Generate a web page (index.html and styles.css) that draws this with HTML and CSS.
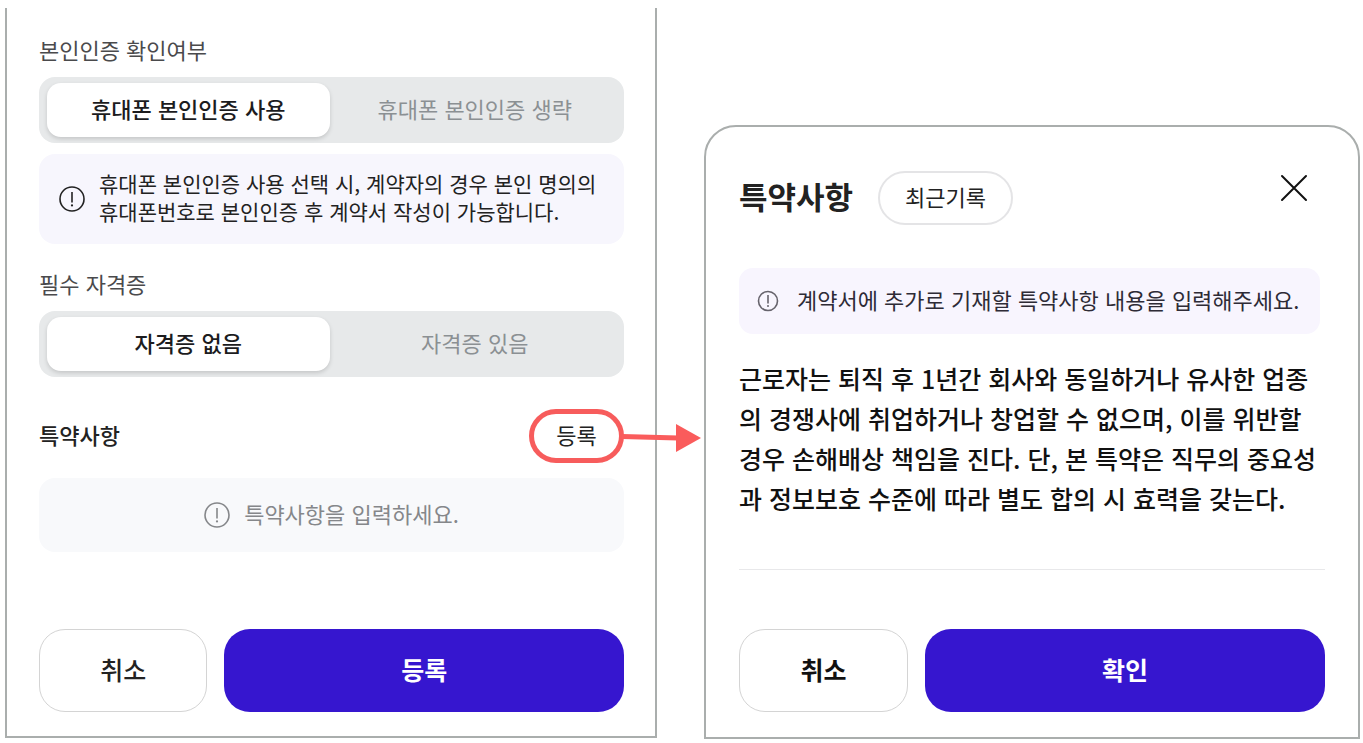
FILE: index.html
```html
<!DOCTYPE html>
<html lang="ko">

<head>
    <meta charset="UTF-8">
    <meta name="viewport" content="width=device-width, initial-scale=1">
    <title>특약사항</title>
    <link rel="stylesheet" href="styles.css">
</head>

<body>
    <main class="screens">
        <section class="panel contract">
            <fieldset class="group">
                <legend>본인인증 확인여부</legend>
                <div class="toggle">
                    <label><input type="radio" name="verify" checked><span>휴대폰 본인인증 사용</span></label>
                    <label><input type="radio" name="verify"><span>휴대폰 본인인증 생략</span></label>
                </div>
            </fieldset>

            <div class="info">
                <svg class="icon" viewBox="0 0 26 26" aria-hidden="true">
                    <circle cx="13" cy="13" r="12" />
                    <path d="M13 6v10.5" />
                    <circle class="dot" cx="13" cy="19.4" r="1.1" />
                </svg>
                <p>휴대폰 본인인증 사용 선택 시, 계약자의 경우 본인 명의의<br>휴대폰번호로 본인인증 후 계약서 작성이 가능합니다.</p>
            </div>

            <fieldset class="group">
                <legend>필수 자격증</legend>
                <div class="toggle">
                    <label><input type="radio" name="license" checked><span>자격증 없음</span></label>
                    <label><input type="radio" name="license"><span>자격증 있음</span></label>
                </div>
            </fieldset>

            <div class="terms-row">
                <h2>특약사항</h2>
                <button type="button" class="add">등록</button>
                <!-- arrow to the popup -->
                <svg class="arrow" viewBox="0 0 80 30" aria-hidden="true">
                    <path d="M0 13.5L56 15" stroke="#fa5c5c" stroke-width="5" />
                    <path d="M54 1L79 15L54 29Z" fill="#fa5c5c" />
                </svg>
            </div>

            <div class="empty">
                <svg class="icon" viewBox="0 0 26 26" aria-hidden="true">
                    <circle cx="13" cy="13" r="12" />
                    <path d="M13 6v10.5" />
                    <circle class="dot" cx="13" cy="19.4" r="1.1" />
                </svg>
                <p>특약사항을 입력하세요.</p>
            </div>

            <div class="actions">
                <button type="button" class="cancel">취소</button>
                <button type="button" class="primary">등록</button>
            </div>
        </section>

        <section class="panel popup">
            <header class="popup-header">
                <h1>특약사항</h1>
                <button type="button" class="recent">최근기록</button>
                <button type="button" class="close" aria-label="닫기">
                    <svg viewBox="0 0 34 34" aria-hidden="true">
                        <path d="M5 5L29 29M29 5L5 29" />
                    </svg>
                </button>
            </header>

            <div class="notice">
                <svg class="icon small" viewBox="0 0 22 22" aria-hidden="true">
                    <circle cx="11" cy="11" r="9.5" />
                    <path d="M11 5v8.5" />
                    <circle class="dot" cx="11" cy="16" r="1" />
                </svg>
                <label for="terms">계약서에 추가로 기재할 특약사항 내용을 입력해주세요.</label>
            </div>

            <textarea id="terms" class="terms">근로자는 퇴직 후 1년간 회사와 동일하거나 유사한 업종의 경쟁사에 취업하거나 창업할 수 없으며, 이를 위반할 경우 손해배상 책임을 진다. 단, 본 특약은 직무의 중요성과 정보보호 수준에 따라 별도 합의 시 효력을 갖는다.</textarea>

            <div class="actions">
                <button type="button" class="cancel">취소</button>
                <button type="button" class="primary">확인</button>
            </div>
        </section>
    </main>
</body>

</html>
```

FILE: styles.css
```css
* {
    box-sizing: border-box;
}

body {
    margin: 0;
    background-color: #fff;
    color: #222;
    font-family: "Noto Sans CJK KR", sans-serif;
    font-size: 22px;
    line-height: 32px;
}

h1, h2, p {
    margin: 0;
}

button, textarea {
    font-family: inherit;
    color: inherit;
}

button {
    padding: 0 0 4px;
    background-color: #fff;
    cursor: pointer;
}

.screens {
    display: grid;
    grid-template-columns: 652fr 656fr;
    column-gap: 47px;
    align-items: start;
    padding: 0 3px 0 5px;
}

.panel {
    display: flex;
    flex-direction: column;
    border: 2px solid #aaaead;
}

.contract {
    margin-top: 8px;
    padding: 25px 31px 24px 32px;
    border-top: none;
}

/* segmented radio groups */
.group {
    min-width: 0;
    margin: 0;
    padding: 0;
    border: none;
}

.group legend {
    padding: 0;
    margin-bottom: 12px;
    color: #4a4a4c;
}

.toggle {
    display: flex;
    gap: 4px;
    padding: 6px 8px;
    border-radius: 16px;
    background-color: #e7e9ea;
}

.toggle label {
    flex: 1;
    cursor: pointer;
}

.toggle input {
    position: absolute;
    opacity: 0;
}

.toggle span {
    display: block;
    padding-bottom: 4px;
    border-radius: 14px;
    line-height: 50px;
    text-align: center;
    color: #8b9093;
}

.toggle input:checked + span {
    background-color: #fff;
    color: #1c1c1e;
    font-weight: 500;
    box-shadow: 0 2px 4px rgba(0, 0, 0, 0.15);
}

.icon {
    flex: none;
    width: 26px;
    height: 26px;
    fill: none;
    stroke: currentColor;
    stroke-width: 1.6;
}

.icon .dot {
    fill: currentColor;
    stroke: none;
}

.icon.small {
    width: 22px;
    height: 22px;
    color: #66636c;
}

.info {
    display: flex;
    align-items: center;
    gap: 14px;
    height: 90px;
    margin: 11px 0 23px;
    padding-left: 20px;
    border-radius: 16px;
    background-color: #f7f6fd;
    font-size: 21px;
    line-height: 28px;
    white-space: nowrap;
}

.info p, .empty p, .notice label, .terms-row h2, .popup-header h1 {
    padding-bottom: 4px;
}

.terms-row {
    position: relative;
    display: flex;
    justify-content: space-between;
    align-items: center;
    margin: 32px 0 15px;
}

.terms-row h2 {
    font-size: 22px;
    font-weight: 500;
}

.add {
    width: 95px;
    height: 54px;
    border: 5px solid #f75c5c;
    border-radius: 27px;
    font-size: 22px;
}

.arrow {
    position: absolute;
    left: 100%;
    top: 14px;
    width: 80px;
    height: 30px;
    margin-left: -2px;
    z-index: 1;
}

.empty {
    display: flex;
    justify-content: center;
    align-items: center;
    gap: 14px;
    height: 74px;
    border-radius: 16px;
    background-color: #f8f9fb;
    color: #85878a;
}

.actions {
    display: flex;
    gap: 17px;
    margin-top: 77px;
}

.actions button {
    height: 83px;
    border-radius: 26px;
    font-size: 25px;
    font-weight: 500;
}

.actions .cancel {
    flex: 5;
    border: 1px solid #d4d4d4;
}

.actions .primary {
    flex: 12;
    border: none;
    background-color: #3616cf;
    color: #fff;
    font-weight: 700;
}

.popup {
    margin-top: 125px;
    padding: 44px 33px 25px;
    border-radius: 32px 32px 0 0;
}

.popup-header {
    display: flex;
    align-items: center;
}

.popup-header h1 {
    font-size: 31px;
    font-weight: 700;
    line-height: 40px;
}

.recent {
    width: 135px;
    height: 54px;
    margin-left: 25px;
    border: 2px solid #e4e4e6;
    border-radius: 27px;
    font-size: 22px;
}

.close {
    align-self: flex-start;
    width: 34px;
    height: 34px;
    margin: 0 14px 0 auto;
    padding: 0;
    border: none;
    background: none;
}

.close svg {
    display: block;
    fill: none;
    stroke: #111;
    stroke-width: 2;
    stroke-linecap: round;
}

.notice {
    display: flex;
    align-items: center;
    gap: 18px;
    height: 66px;
    margin: 43px 5px 24px 0;
    padding-left: 18px;
    border-radius: 14px;
    background-color: #f8f5fe;
    color: #2e2b36;
    white-space: nowrap;
}

.terms {
    display: block;
    width: 100%;
    height: 212px;
    padding: 0 8px 0 0;
    border: none;
    border-bottom: 1px solid #e8e8ea;
    outline: none;
    resize: none;
    overflow: hidden;
    background: none;
    color: #111;
    font-size: 25px;
    font-weight: 500;
    line-height: 40px;
}

.popup .actions {
    margin-top: 59px;
}

.popup .cancel {
    color: #111;
    font-weight: 700;
}
```
